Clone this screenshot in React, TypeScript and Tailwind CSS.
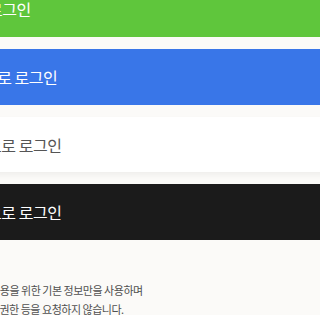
export default function App() {
  const font = { fontFamily: '"Noto Sans CJK KR", "Noto Sans", sans-serif' };
  return (
    <div className="w-[320px] h-[315px] overflow-hidden bg-[#fbfaf8] tracking-[-0.03em]" style={font}>
      <div className="-mt-[19px] -ml-[200px] w-[540px] flex flex-col gap-3">
        <button className="h-[56px] flex items-center pl-[128px] bg-[#5fc63c] text-white text-[16px]">
          네이버로 로그인
        </button>
        <button className="h-[56px] flex items-center pl-[126px] bg-[#3976e8] text-white text-[16px]">
          페이스북으로 로그인
        </button>
        <button className="h-[55px] flex items-center pl-[127px] bg-white text-[#555] text-[16px] shadow-[0_3px_6px_rgba(0,0,0,0.05)]">
          구글 계정으로 로그인
        </button>
        <button className="h-[56px] flex items-center pl-[127px] bg-[#1b1b1b] text-white text-[16px]">
          애플 계정으로 로그인
        </button>
      </div>
      <p className="mt-[41px] -ml-[200px] w-[471px] text-center text-[11px] leading-[19px] text-[#505050]">
        네이버 서비스 이용을 위한 기본 정보만을 사용하며
        <br />
        게시물 작성 권한 등을 요청하지 않습니다.
      </p>
    </div>
  );
}
